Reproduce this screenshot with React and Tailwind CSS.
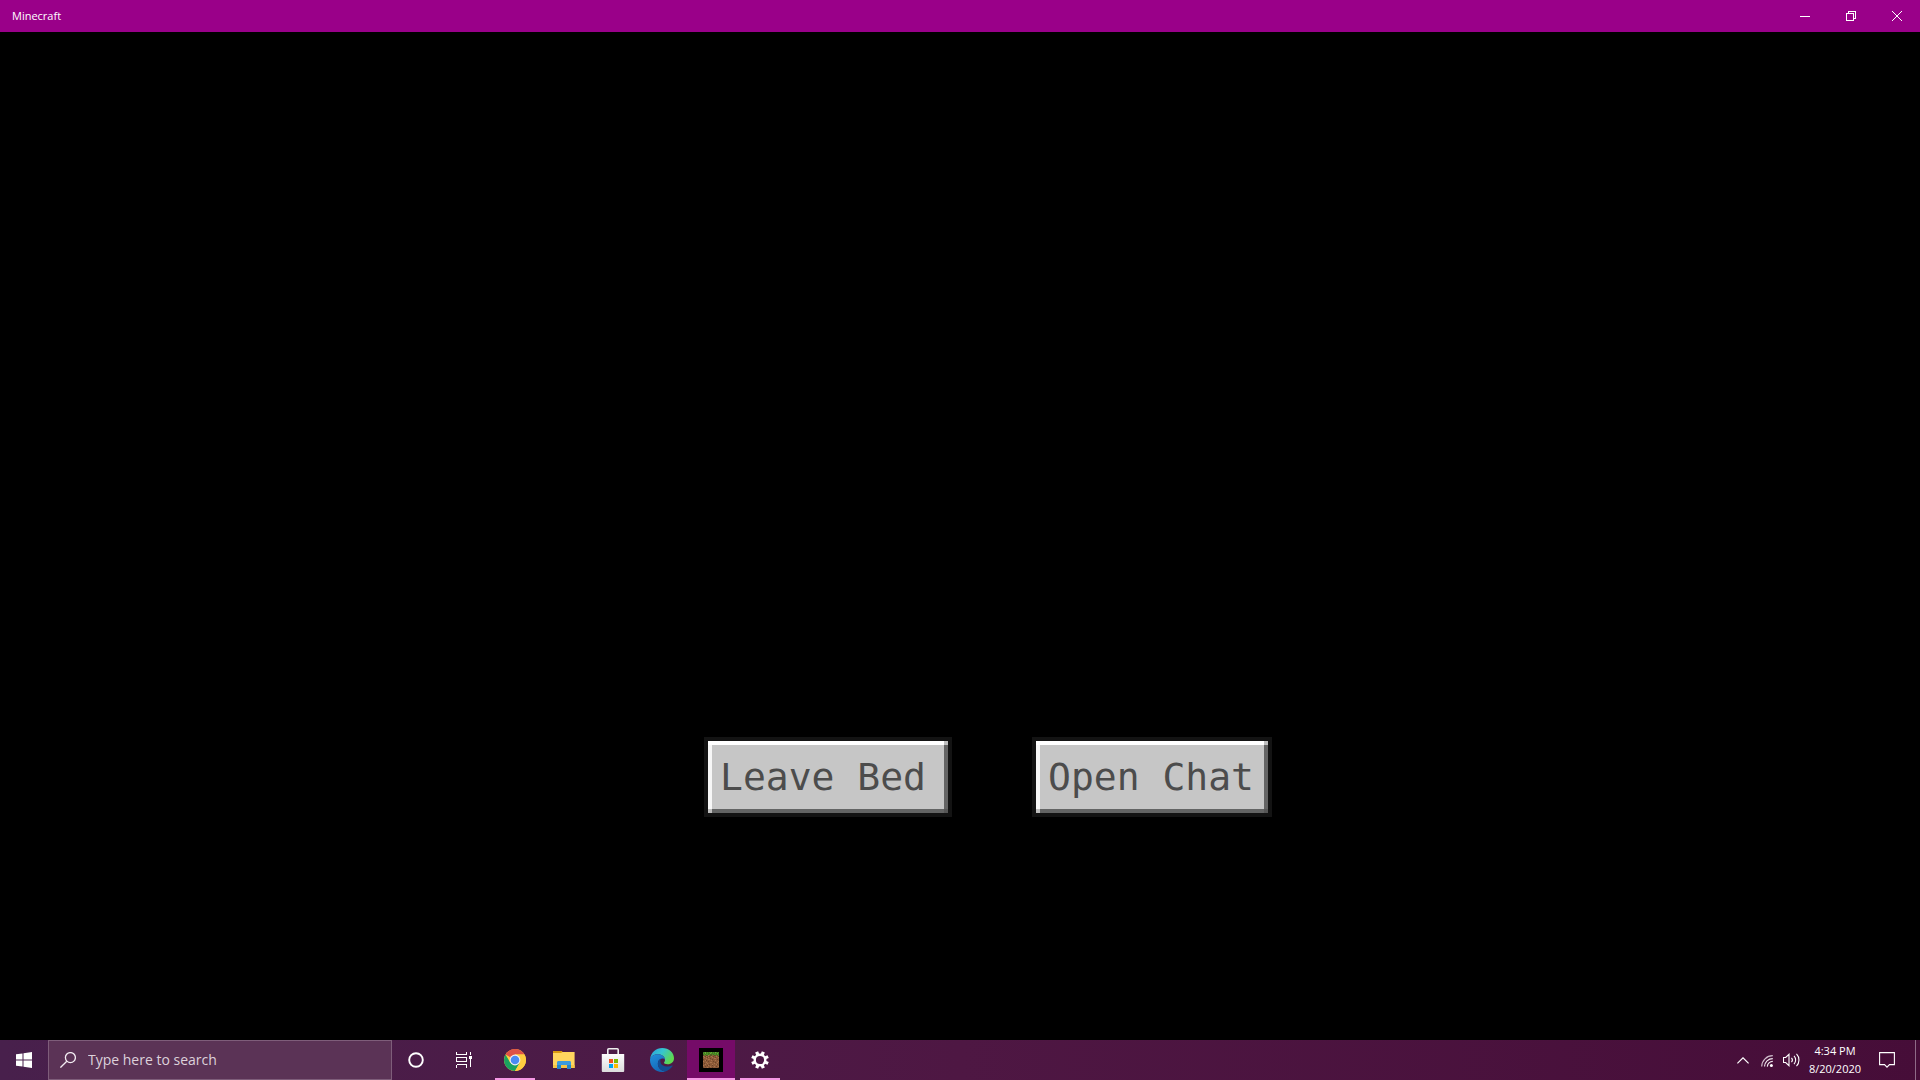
import React, { useState } from 'react';

// 16x16 grass block, one letter per pixel
const GRASS_BLOCK = [
    'gGlgGgGGlgGglGgG',
    'GglgGgglGgGgGglg',
    'gGgGGgGgdGgGGgGg',
    'dGbdgmbdgbbdgbdG',
    'mbdmbbdbmbdbbmbd',
    'bmbbdmbbbmbbdbbm',
    'bbbmbbbdbbbmmbbb',
    'dbbbbmmbbdbbbbdb',
    'bbmdbbbbmbbbmbbb',
    'mbbbbdbbbbdbbbbm',
    'bbbmbbbmmbbbdbmb',
    'bdbbmbbbbbbmbbbb',
    'bbmbbbdbbmbbbmdb',
    'mbbbdmbbbdbbbbbb',
    'bbdbbbbmbbbmbdbm',
    'dbbbmbdbbdbbbbbd',
];

const BLOCK_COLORS = {
    g: '#3f7a1f',
    G: '#4f8f28',
    l: '#66aa35',
    d: '#6b4429',
    b: '#8c5a38',
    m: '#a8734c',
};

const WindowsIcon = () => (
    <svg className="w-4 h-4" viewBox="0 0 16 16" fill="#fff">
        <path d="M0 2.3 6.5 1.4V7.5H0zM7.5 1.2 16 0V7.5H7.5zM0 8.5H6.5V14.6L0 13.7zM7.5 8.5H16V16L7.5 14.8z" />
    </svg>
);

const SearchIcon = () => (
    <svg className="w-4 h-4 shrink-0" viewBox="0 0 16 16" fill="none" stroke="#f3ecf2" strokeWidth="1.3">
        <circle cx="10.4" cy="5.6" r="5" />
        <path d="M6.8 9.2 0.4 15.6" />
    </svg>
);

const CortanaIcon = () => (
    <svg className="w-4 h-4" viewBox="0 0 16 16" fill="none" stroke="#fff" strokeWidth="1.9">
        <circle cx="8" cy="8" r="6.8" />
    </svg>
);

const TaskViewIcon = () => (
    <svg className="w-4 h-4" viewBox="0 0 16 16" fill="none" stroke="#fff" shapeRendering="crispEdges">
        <path d="M0.5 0v3M0.5 2.5h10M10.5 0v3M0.5 15.5v-3M0.5 12.5h10M10.5 15.5v-3" />
        <path d="M0.5 5.5h10v4h-10zM14.5 0v3M14.5 7v8" />
        <path d="M13 4h3v3h-3z" fill="#fff" stroke="none" />
    </svg>
);

const ChromeIcon = () => (
    <svg className="w-6 h-6" viewBox="0 0 24 24">
        <circle cx="12" cy="12" r="11" fill="#ffcd40" />
        <path d="M12 12 2.5 6.5A11 11 0 0 1 21.5 6.5H12z" fill="#de5246" />
        <path d="M2.5 6.5A11 11 0 0 0 12 23L16.8 14.7 12 12 7.2 14.7z" fill="#1aa15f" />
        <path d="M12 6.5H21.5A11 11 0 0 1 12 23L16.8 14.7z" fill="#ffcd40" />
        <circle cx="12" cy="12" r="5.4" fill="#f1f1f1" />
        <circle cx="12" cy="12" r="4.3" fill="#4a8af4" />
    </svg>
);

const ExplorerIcon = () => (
    <svg className="w-6 h-6" viewBox="0 0 24 24">
        <path d="M1 3h9l1 2v3H1z" fill="#d99a10" />
        <path d="M1 5h8l1.5-1H22.6v16H1z" fill="#ffd55e" />
        <path d="M1 17h21.6v3H1z" fill="#f5c445" />
        <path d="M5 21v-6.3c0-1 .5-1.7 1.5-1.7h11c1 0 1.5.7 1.5 1.7V21h-4v-4H9v4z" fill="#3b9add" />
        <path d="M5 17h4v4H5zM15 17h4v4h-4z" fill="#2684c9" />
    </svg>
);

const StoreIcon = () => (
    <svg className="w-6 h-6" viewBox="0 0 24 24">
        <defs>
            <linearGradient id="bag" x1="0" y1="0" x2="0" y2="1">
                <stop offset="0" stopColor="#fdfdfd" />
                <stop offset="1" stopColor="#dcdcdc" />
            </linearGradient>
        </defs>
        <path d="M6.8 7V1.8C6.8 1 7.2 .8 7.8 .8H16.2c.6 0 1 .2 1 1V7" fill="none" stroke="#eee" strokeWidth="1.6" />
        <path d="M.8 6h22.4v16.8c0 .8-.4 1.2-1.2 1.2H2c-.8 0-1.2-.4-1.2-1.2z" fill="url(#bag)" />
        <path d="M8 11h4v4H8z" fill="#f25022" />
        <path d="M13 11h4v4h-4z" fill="#7fba00" />
        <path d="M8 16h4v4H8z" fill="#00a4ef" />
        <path d="M13 16h4v4h-4z" fill="#ffb900" />
    </svg>
);

const EdgeIcon = () => (
    <svg className="w-6 h-6" viewBox="0 0 24 24">
        <defs>
            <linearGradient id="edgeTop" x1="0" y1="0" x2="1" y2="0.5">
                <stop offset="0" stopColor="#2a9ddc" />
                <stop offset="0.5" stopColor="#36c5d0" />
                <stop offset="1" stopColor="#5fd84f" />
            </linearGradient>
            <linearGradient id="edgeLeft" x1="0" y1="0" x2="0.5" y2="1">
                <stop offset="0" stopColor="#2190dc" />
                <stop offset="1" stopColor="#1568b6" />
            </linearGradient>
        </defs>
        <path d="M.1 10.8C1 4.4 6 0 12.2 0 19 0 24 4.7 24 10.2c0 3.6-2.7 6-6.3 6-2.6 0-3.7-.8-3.7-1.5 0-.6 1-1 1-2.9C15 9 12 6.3 8 6.3 4 6.3 1.3 8.3.1 10.8z" fill="url(#edgeTop)" />
        <path d="M.1 10.8C1.3 8 4.3 6.3 7.8 6.3c4.2 0 7.2 2.6 7.2 5.4C13.7 9.7 9 10.2 8 14.2 7 19 11 23 15.5 23.4 7.5 25.8 0 20 0 12z" fill="url(#edgeLeft)" />
        <path d="M10.8 10.6C9 11.6 7.9 13.4 7.9 15.7c0 4.2 3.4 7.4 7.6 7.7 3-.8 5.5-2.7 7.1-5.3.3-.5-.1-.8-.6-.5-4.8 2.2-11.7.4-11.7-4.7 0-.9.1-1.6.5-2.3z" fill="#134c92" />
    </svg>
);

const MinecraftIcon = () => (
    <svg className="w-6 h-6" viewBox="0 0 24 24" shapeRendering="crispEdges">
        <rect width="24" height="24" fill="#000" />
        {GRASS_BLOCK.map((row, y) =>
            row.split('').map((c, x) => (
                <rect key={`${x}-${y}`} x={x + 4} y={y + 4} width="1" height="1" fill={BLOCK_COLORS[c]} />
            ))
        )}
    </svg>
);

const SettingsIcon = () => (
    <svg className="w-[18px] h-[18px]" viewBox="0 0 18 18" fill="none" stroke="#fff">
        <circle cx="9" cy="9" r="5.3" strokeWidth="2.4" />
        {[22.5, 67.5, 112.5, 157.5, 202.5, 247.5, 292.5, 337.5].map((a) => (
            <path key={a} d="M9 3.5V.2" strokeWidth="3.2" transform={`rotate(${a} 9 9)`} />
        ))}
    </svg>
);

const WifiIcon = () => (
    <svg className="w-3 h-3" viewBox="0 0 12 12" fill="none" stroke="#f2eaf0" strokeWidth="1.2">
        <path d="M.7 11.5A11 11 0 0 1 11.8 .7" opacity="0.8" />
        <path d="M3.5 11.6A8.3 8.3 0 0 1 11.8 3.6" />
        <path d="M6.3 11.6A5.5 5.5 0 0 1 11.8 6.4" />
        <circle cx="10.4" cy="10.4" r="1.5" fill="#fff" stroke="none" />
    </svg>
);

const VolumeIcon = () => (
    <svg className="w-[17px] h-4" viewBox="0 0 17 16" fill="none" stroke="#fff" strokeWidth="1.1">
        <path d="M.5 5.5h2.2L6 2.3v11.4l-3.3-3.2H.5z" />
        <path d="M8.5 5.8a3.4 3.4 0 0 1 0 4.4M11 3.8a6.2 6.2 0 0 1 0 8.4M13.5 1.8a9 9 0 0 1 0 12.4" />
    </svg>
);

const GameButton = ({ children, onClick, className }) => (
    <button onClick={onClick} className={`border-4 border-[#131313] ${className}`}>
        <span className="relative block border-4 border-t-white border-l-[#f7f7f7] border-r-[#646464] border-b-[#636464] bg-[#c6c6c6] px-2 pt-2 pb-2 font-['DejaVu_Sans_Mono',monospace] text-[38px] leading-[48px] text-left text-[#4c4c4c] whitespace-nowrap">
            {children}
            <span className="absolute -top-1 -left-1 w-1 h-1 bg-white" />
            <span className="absolute -top-1 -right-1 w-1 h-1 bg-[#bfbfbf]" />
            <span className="absolute -bottom-1 -left-1 w-1 h-1 bg-[#bfbfbf]" />
            <span className="absolute -bottom-1 -right-1 w-1 h-1 bg-[#565656]" />
        </span>
    </button>
);

const TaskButton = ({ label, running, active, children }) => (
    <button
        aria-label={label}
        className={`relative w-12 h-full flex items-center justify-center ${active ? 'bg-[#750b68]' : ''}`}
    >
        {children}
        {running && (
            <span className={`absolute bottom-0 h-[2px] bg-[#f598e4] ${active ? 'inset-x-0' : 'inset-x-1'}`} />
        )}
    </button>
);

const TitleBar = () => (
    <header className="h-8 shrink-0 flex items-center justify-between bg-[#9a0089] pl-3 text-white">
        <h1 className="text-[11px] leading-4">Minecraft</h1>
        <div className="flex h-full">
            <button aria-label="Minimize" className="w-[46px] h-full flex items-center justify-center">
                <svg className="w-[10px] h-[10px]" viewBox="0 0 10 10" stroke="#fff" shapeRendering="crispEdges">
                    <path d="M0 5.5h10" />
                </svg>
            </button>
            <button aria-label="Restore" className="w-[46px] h-full flex items-center justify-center">
                <svg className="w-[10px] h-[10px]" viewBox="0 0 10 10" fill="none" stroke="#fff" shapeRendering="crispEdges">
                    <path d="M.5 2.5h7v7h-7zM2.5 2.5v-2h7v7h-2" />
                </svg>
            </button>
            <button aria-label="Close" className="w-[46px] h-full flex items-center justify-center">
                <svg className="w-[10px] h-[10px]" viewBox="0 0 10 10" fill="none" stroke="#fff">
                    <path d="M0 0l10 10M10 0 0 10" />
                </svg>
            </button>
        </div>
    </header>
);

const Taskbar = () => {
    const [query, setQuery] = useState('');

    return (
        <footer className="h-10 shrink-0 flex bg-linear-to-r from-[#48204c] via-[#4e1743] to-[#460d38] text-white">
            <TaskButton label="Start"><WindowsIcon /></TaskButton>
            <label className="w-[344px] h-full flex items-center gap-3 pl-[11px] border border-[#7e5d7a] bg-[#5b3356]">
                <SearchIcon />
                <input
                    type="text"
                    aria-label="Search"
                    placeholder="Type here to search"
                    value={query}
                    onChange={(e) => setQuery(e.target.value)}
                    className="flex-1 min-w-0 bg-transparent outline-none text-[14px] leading-5 text-white placeholder:text-[#ddd1db]"
                />
            </label>
            <TaskButton label="Cortana"><CortanaIcon /></TaskButton>
            <TaskButton label="Task View"><TaskViewIcon /></TaskButton>

            {/* Pinned and running apps */}
            <nav className="flex gap-px ml-[3px]">
                <TaskButton label="Google Chrome" running><ChromeIcon /></TaskButton>
                <TaskButton label="File Explorer"><ExplorerIcon /></TaskButton>
                <TaskButton label="Microsoft Store"><StoreIcon /></TaskButton>
                <TaskButton label="Microsoft Edge"><EdgeIcon /></TaskButton>
                <TaskButton label="Minecraft" running active><MinecraftIcon /></TaskButton>
                <TaskButton label="Settings" running><SettingsIcon /></TaskButton>
            </nav>

            {/* System tray */}
            <div className="flex items-center ml-auto h-full">
                <button aria-label="Show hidden icons" className="w-6 h-full flex items-center justify-center">
                    <svg className="w-3 h-[7px]" viewBox="0 0 12 7" fill="none" stroke="#fff" strokeWidth="1.2">
                        <path d="M.4 6.4 6 .8l5.6 5.6" />
                    </svg>
                </button>
                <button aria-label="Network" className="w-6 h-full flex items-center justify-center pt-[2px]">
                    <WifiIcon />
                </button>
                <button aria-label="Volume" className="w-6 h-full flex items-center justify-center">
                    <VolumeIcon />
                </button>
                <button className="w-16 h-full text-center text-[11px] leading-[18px]">
                    <time className="block">4:34 PM</time>
                    <time className="block">8/20/2020</time>
                </button>
                <button aria-label="Notifications" className="w-10 h-full flex items-center justify-center mr-2">
                    <svg className="w-4 h-4" viewBox="0 0 16 16" fill="none" stroke="#fff" strokeWidth="1.1">
                        <path d="M.6 .6h14.8v12h-4.9L8 15.2 5.5 12.6H.6z" />
                    </svg>
                </button>
                <button aria-label="Show desktop" className="w-[5px] h-full border-l border-[#8f6a87]" />
            </div>
        </footer>
    );
};

const App = () => {
    const [inBed, setInBed] = useState(true);

    return (
        <div className="h-screen flex flex-col bg-black font-['Open_Sans','Noto_Sans',sans-serif]">
            <TitleBar />
            <main className="flex-1 flex items-end justify-center gap-20 pl-14 pb-[223px]">
                {inBed && (
                    <>
                        <GameButton className="w-[248px]" onClick={() => setInBed(false)}>Leave Bed</GameButton>
                        <GameButton className="w-[240px]">Open Chat</GameButton>
                    </>
                )}
            </main>
            <Taskbar />
        </div>
    );
};

export default App;
